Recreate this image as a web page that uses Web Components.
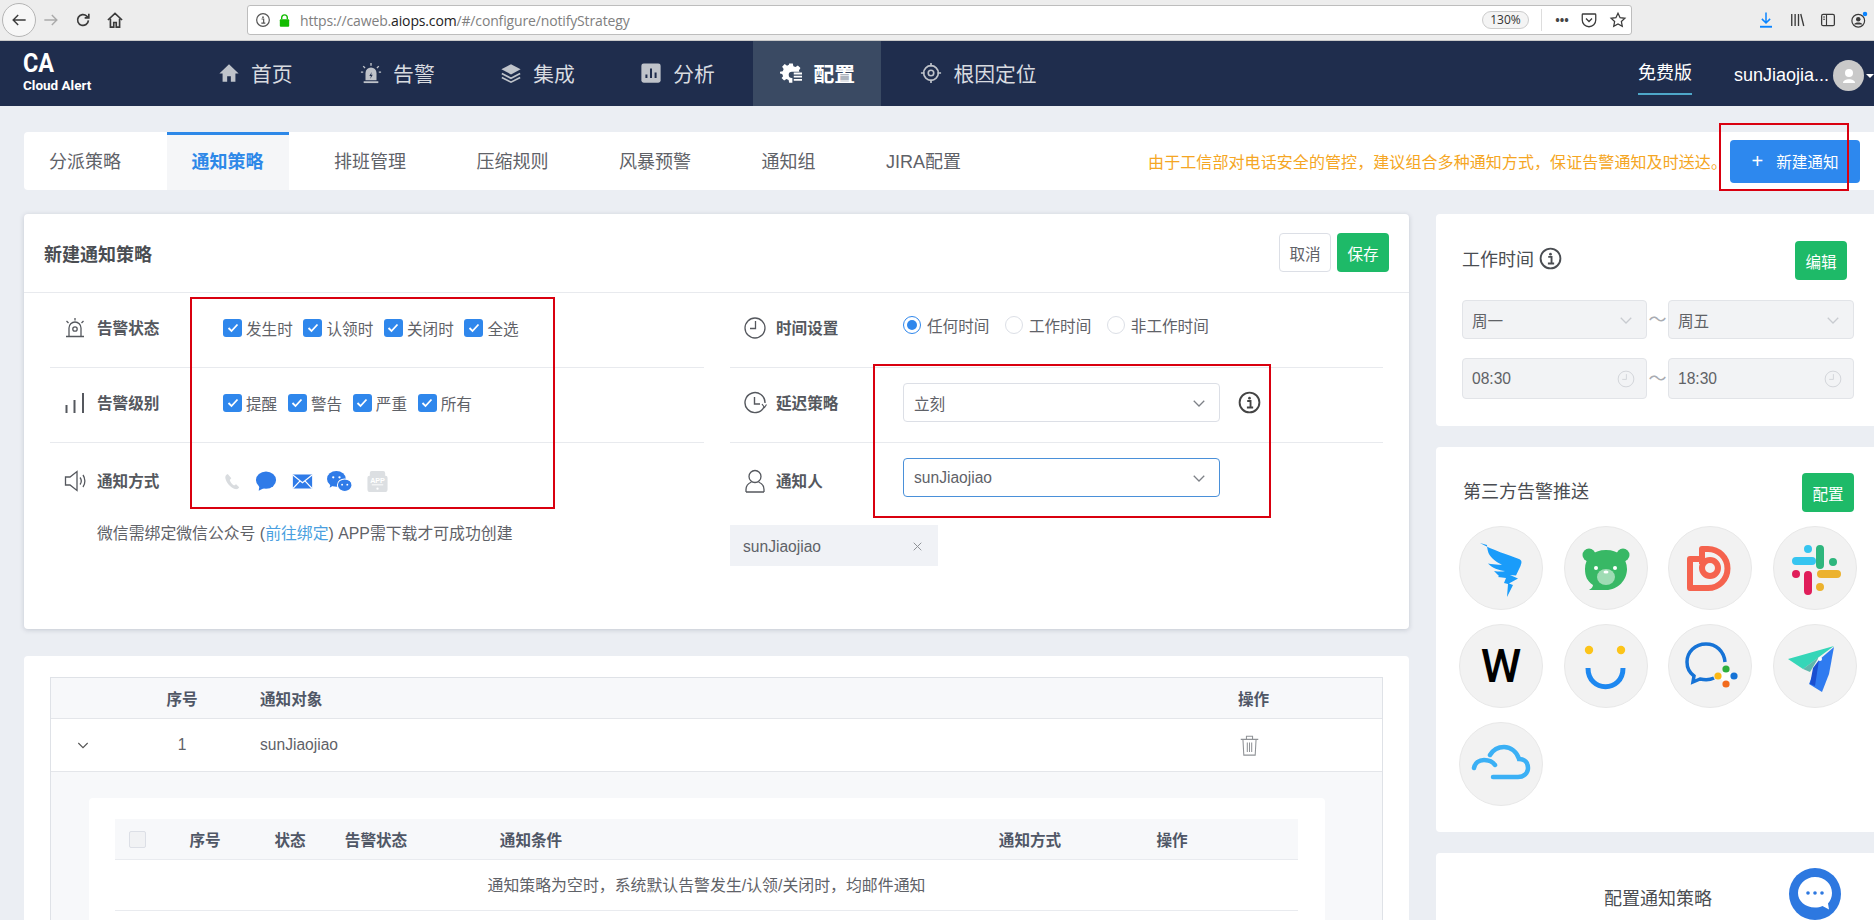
<!DOCTYPE html>
<html lang="zh-CN">
<head>
<meta charset="utf-8">
<title>notifyStrategy</title>
<style>
  html, body { margin: 0; height: 920px; overflow: hidden; }
  body {
    position: relative;
    background: #ebeef3;
    color: #5f6268;
    font-family: "Liberation Sans", "Noto Sans CJK SC", sans-serif;
    font-size: 15.6px;
  }
  .content { display: flex; flex-direction: column; gap: 24px; padding: 26px 0 0 24px; }
  .columns { display: grid; grid-template-columns: 1385px 438px; column-gap: 27px; align-items: start; }
  .stack-left { display: flex; flex-direction: column; gap: 27px; }
  .stack-right { display: flex; flex-direction: column; gap: 21px; }
</style>
</head>
<body>
<ca-browser-bar></ca-browser-bar>
<ca-nav></ca-nav>
<div class="content">
  <ca-tabs></ca-tabs>
  <div class="columns">
    <div class="stack-left">
      <ca-strategy-form></ca-strategy-form>
      <ca-policy-table></ca-policy-table>
    </div>
    <div class="stack-right">
      <ca-work-time></ca-work-time>
      <ca-push-grid></ca-push-grid>
      <ca-config-card></ca-config-card>
    </div>
  </div>
</div>
<ca-annotation x="1719" y="123" w="130" h="68"></ca-annotation>
<ca-annotation x="190" y="297" w="365" h="212"></ca-annotation>
<ca-annotation x="873" y="364" w="398" h="154"></ca-annotation>
<ca-chat-bubble></ca-chat-bubble>

<script>
const ICONS = {
  back: '<path d="M20 12H5M11 6l-6 6 6 6" fill="none" stroke="#3b3b3b" stroke-width="1.7"/>',
  forward: '<path d="M4 12h15M13 6l6 6-6 6" fill="none" stroke="#aaa" stroke-width="1.7"/>',
  reload: '<path d="M18.5 12.5a6.5 6.5 0 1 1-2-5.2L19 9.5M19 4.5v5h-5" fill="none" stroke="#3b3b3b" stroke-width="2"/>',
  browserHome: '<path d="M3.500 12l8.500-8 8.500 8M6.500 10.500v10h4V15h3v5.500h4v-10" fill="none" stroke="#3b3b3b" stroke-width="2"/>',
  circleInfo: '<circle cx="12" cy="12" r="9.500" fill="none" stroke="currentColor" stroke-width="1.800"/><circle cx="12" cy="7.800" r="1.300" fill="currentColor"/><path d="M9.800 10.500H13v6M9.500 16.800h6" fill="none" stroke="currentColor" stroke-width="1.800"/>',
  lock: '<path d="M7.500 10V7.500a4.500 4.500 0 0 1 9 0V10" fill="none" stroke="#12bc00" stroke-width="2.200"/><rect x="4.500" y="10" width="15" height="12" rx="1.500" fill="#12bc00"/>',
  pocket: '<path d="M4 4h16a1 1 0 0 1 1 1v7a9 9 0 0 1-18 0V5a1 1 0 0 1 1-1z" fill="none" stroke="#3b3b3b" stroke-width="1.700"/><path d="M8 10l4 4 4-4" fill="none" stroke="#3b3b3b" stroke-width="1.700"/>',
  star: '<path d="M12 3l2.800 5.900 6.400.8-4.700 4.400 1.200 6.400L12 17.400l-5.700 3.100 1.200-6.400-4.700-4.400 6.400-.8z" fill="none" stroke="#3b3b3b" stroke-width="1.700"/>',
  download: '<path d="M12 2v14M6.500 10.500L12 16l5.500-5.500" fill="none" stroke="#0a84ff" stroke-width="2"/><path d="M4 21h16" stroke="#0a84ff" stroke-width="2.500"/>',
  library: '<path d="M5 4v16M9.500 4v16M14 4v16M17 4l4 16" fill="none" stroke="#3b3b3b" stroke-width="1.800"/>',
  sidebar: '<rect x="3.500" y="4.500" width="17" height="15" rx="2" fill="none" stroke="#3b3b3b" stroke-width="1.700"/><path d="M10 4.500v15M5.500 8h2.500M5.500 11h2.500" fill="none" stroke="#3b3b3b" stroke-width="1.500"/>',
  account: '<circle cx="11" cy="13" r="8.500" fill="none" stroke="#3b3b3b" stroke-width="1.600"/><circle cx="11" cy="11" r="3" fill="#3b3b3b"/><path d="M5.500 18c1-3.500 10-3.500 11 0" fill="#3b3b3b"/><circle cx="20" cy="4" r="3" fill="#0a84ff"/>',
  navHome: '<path d="M12 2.500L1.500 12.500H5v9h5v-6h4v6h5v-9h3.500z" fill="currentColor"/>',
  navAlarm: '<path d="M6 20v-8a6 6 0 0 1 12 0v8z" fill="currentColor"/><path d="M4 21h16v2H4z" fill="currentColor"/><path d="M12.800 11l-2.600 4.300h1.700l-.7 3.200 2.700-4.500h-1.800z" fill="#1f2d4d"/><path d="M12 1v3M3.500 4.500l2 2M20.500 4.500l-2 2M1 11h2.500M20.500 11H23" stroke="currentColor" stroke-width="1.500"/>',
  navLayers: '<path d="M12 2.500L1.500 8 12 13.500 22.500 8z" fill="currentColor"/><path d="M2 12.500l10 5.300 10-5.300M2 16.800l10 5.200 10-5.200" fill="none" stroke="currentColor" stroke-width="1.800"/>',
  navChart: '<rect x="1.500" y="1.500" width="21" height="21" rx="2.500" fill="currentColor"/><path d="M7 17.500v-4M12 17.500V7M17 17.500v-6" stroke="#1f2d4d" stroke-width="2.200"/>',
  navGear: '<path d="M10 1.500h4l.6 3 2.300 1 2.600-1.700 2.800 2.800L20.600 9.200l.6 1.300H13a3.500 3.500 0 1 0 0 7h.5v5H10l-.6-3-2.300-1-2.600 1.700-2.800-2.800L3.400 15.500l-1-2.300-2.400-.6v-2l3-.6 1-2.300L2.300 5.100l2.800-2.800 2.600 1.700 2-.9z" fill="currentColor"/><path d="M15 12.500h9M15 16h9M15 19.500h9" stroke="currentColor" stroke-width="2"/>',
  navTarget: '<circle cx="12" cy="12" r="8" fill="none" stroke="currentColor" stroke-width="1.800"/><circle cx="12" cy="12" r="3" fill="none" stroke="currentColor" stroke-width="1.800"/><path d="M12 1v4M12 19v4M1 12h4M19 12h4" stroke="currentColor" stroke-width="1.800"/>',
  alarm: '<path d="M6 20v-8a6 6 0 0 1 12 0v8" fill="none" stroke="currentColor" stroke-width="1.300"/><circle cx="12" cy="13" r="2.200" fill="none" stroke="currentColor" stroke-width="1.300"/><path d="M3 20.500h18M12 2v2.500M3.500 5l2 2M20.500 5l-2 2" fill="none" stroke="currentColor" stroke-width="1.300"/>',
  bars: '<path d="M3.500 22v-8M11.500 22V9M20 22V2" stroke="currentColor" stroke-width="2"/>',
  speaker: '<path d="M2.500 8H7L14 2.500v19L7 16H2.500z" fill="none" stroke="currentColor" stroke-width="1.300"/><path d="M17 8.500c1.500 2 1.500 5 0 7M20 6c2.500 3.500 2.500 8.500 0 12" fill="none" stroke="currentColor" stroke-width="1.300"/>',
  clock: '<circle cx="12" cy="12" r="10" fill="none" stroke="currentColor" stroke-width="1.300"/><path d="M12.500 5v7.500H7" fill="none" stroke="currentColor" stroke-width="1.300"/>',
  delay: '<path d="M21 16a10 10 0 1 1 1-4" fill="none" stroke="currentColor" stroke-width="1.400"/><path d="M19 13l2.500 3.500 2-3" fill="none" stroke="currentColor" stroke-width="1.200"/><path d="M11.500 6v7H17" fill="none" stroke="currentColor" stroke-width="1.400"/>',
  person: '<circle cx="12" cy="7.500" r="6" fill="none" stroke="currentColor" stroke-width="1.300"/><path d="M3 23v-2.500c0-4 3-6.500 5.500-7.500M21 23v-2.500c0-4-3-6.500-5.500-7.500M3 23h18" fill="none" stroke="currentColor" stroke-width="1.300"/>',
  phone: '<path d="M6 2.500c-2.500 1-3.500 3-3 5.500 1.500 6 6 11.500 12 13.500 2.500.6 4.500-.3 5.500-2.300l-4-3.700-2.500 1.500c-2.500-1.500-4.500-4-5.500-7l2-2z" fill="#d9dcdf"/>',
  sms: '<ellipse cx="12" cy="11" rx="11" ry="9.500" fill="#2f7be8"/><path d="M5 17l-1 5.500 6-3z" fill="#2f7be8"/>',
  mail: '<rect x="1" y="4" width="22" height="16" fill="#2f7be8"/><path d="M1 4.500l11 9 11-9M1 20l8.500-9M23 20l-8.500-9" fill="none" stroke="#fff" stroke-width="1.300"/>',
  wechat: '<ellipse cx="9" cy="9.500" rx="9" ry="7.500" fill="#2f7be8"/><path d="M3.500 14l-1 4 4-2.500z" fill="#2f7be8"/><ellipse cx="17" cy="15.500" rx="7" ry="6" fill="#2f7be8" stroke="#fff" stroke-width="1"/><circle cx="6" cy="8" r="1.100" fill="#fff"/><circle cx="12" cy="8" r="1.100" fill="#fff"/><circle cx="14.500" cy="15" r=".9" fill="#fff"/><circle cx="19.500" cy="15" r=".9" fill="#fff"/>',
  appGrey: '<path d="M6 1h12a2 2 0 0 1 2 2v3h.500a2 2 0 0 1 2 2v12a3 3 0 0 1-3 3H4.500a3 3 0 0 1-3-3V8a2 2 0 0 1 2-2H4V3a2 2 0 0 1 2-2z" fill="#dcdfe2"/><text x="12" y="13.500" text-anchor="middle" font-size="7.500" font-weight="700" fill="#fff" font-family="Liberation Sans, sans-serif">APP</text><path d="M6 15.500h12" stroke="#fff" stroke-width="1"/><circle cx="12" cy="19.500" r="1.200" fill="#fff"/>',
  chevron: '<path d="M5 9l7 7 7-7" fill="none" stroke="currentColor" stroke-width="1.700"/>',
  close: '<path d="M5 5l14 14M19 5L5 19" fill="none" stroke="currentColor" stroke-width="1.800"/>',
  trash: '<path d="M2 5h20M8.500 5V1.500h7V5M4.500 5l1 18h13l1-18M9.500 8.500v11M12 8.500v11M14.500 8.500v11" fill="none" stroke="currentColor" stroke-width="1.200"/>',
  timeClock: '<circle cx="12" cy="12" r="10.500" fill="none" stroke="currentColor" stroke-width="1"/><path d="M12.500 5.500v7H7" fill="none" stroke="currentColor" stroke-width="1"/>'
};

const LOGOS = {
  dingtalk: '<path fill="#1a9cfa" d="M21 17C33 24 50 29 60 33c3 1.500 3 3 1.500 7L57 49.500l-6-.5 8 3.500-9 5 4 1.500-6 12 1-13-4-1 2-5-8-1 1-1-5-5c4 .5 8 1 11 0-6-.500-13-3-17-7.500 5 1 10 1.500 14 1-5-2-11-6-13.500-11.500-.5-1.500-1.500-5-1.500-8z"/>',
  bear: '<circle cx="25" cy="29" r="6.500" fill="#38b865"/><circle cx="59" cy="29" r="6.500" fill="#38b865"/><path fill="#38b865" d="M42 24c13 0 21 8 21 19s-9 21-21 21H25c2-1 4-3 4-5-6-4-8-9-8-16 0-11 8-19 21-19z"/><circle cx="32" cy="42" r="2" fill="#fff"/><circle cx="51" cy="42" r="2" fill="#fff"/><ellipse cx="42" cy="51" rx="9" ry="8" fill="#9fdcb4"/><ellipse cx="42" cy="46" rx="2.500" ry="1.500" fill="#fff"/>',
  dutyapp: '<g fill="none" stroke="#f5634e" stroke-width="6" stroke-linejoin="round"><path d="M34 38V23h6a19.500 19.500 0 1 1 0 39H22V33h12"/><circle cx="42" cy="42" r="8"/></g>',
  slack: '<g stroke-linecap="round" stroke-width="8" fill="none"><path d="M23 35h16M35 23h.01" stroke="#36c5f0"/><path d="M47 23v16M60 36h.01" stroke="#2eb67d"/><path d="M35 49v16M23 48h.01" stroke="#e01e5a"/><path d="M48 48h16M47 61h.01" stroke="#ecb22e"/></g>',
  smile: '<circle cx="25" cy="26" r="4.200" fill="#fcc419"/><circle cx="57" cy="26" r="4.200" fill="#fcc419"/><path d="M24 44c0 25 35 25 35 0" fill="none" stroke="#1e88f0" stroke-width="5"/>',
  wecom: '<path fill="none" stroke="#1673d6" stroke-width="3.500" d="M57 38c-1-11-9-18-19-18-11 0-19 8-19 18 0 6 3 11 7 14l-1 6 7-3c5 1 10 1 14-1"/><path d="M58 45l8 7-8 8-8-8z" fill="#fff"/><circle cx="58" cy="45" r="3.600" fill="#2eaf3c"/><circle cx="50" cy="52" r="3.600" fill="#fbb917"/><circle cx="58" cy="60" r="3.600" fill="#f26b1d"/><circle cx="66" cy="52" r="3.600" fill="#1673d6"/>',
  plane: '<path fill="#35d6b8" d="M15 35l46-13-15 11-16 12z"/><path fill="#1f9f8e" d="M30 45l16-12-9 15z" opacity=".7"/><path fill="#2f7bf0" d="M61 23l-5 27-7 18-13-8 10-24z"/><path fill="#1a4fd0" d="M46 36l-6 8-3 16 5 2z"/><circle cx="47" cy="35" r="2" fill="#fff"/>',
  cloud: '<path fill="none" stroke="#3bb0f5" stroke-width="4.500" stroke-linecap="round" d="M34 55h25c6 0 10-4 10-9s-3-9-9-9c-2-7-8-12-15-12-6 0-11 3-14 8M15 46c1-5 5-8 10-8 5 0 9 2 11 5"/>'
};

const icon = (name, w, h) => `<svg width="${w}" height="${h || w}" viewBox="0 0 24 24" style="display:block;flex:none">${ICONS[name]}</svg>`;

class CaBrowserBar extends HTMLElement {
  connectedCallback() {
    this.attachShadow({ mode: 'open' }).innerHTML = `
      <style>
        :host { display: flex; align-items: center; height: 40px; background: #ededed; border-bottom: 1px solid #c9c9c9; font-family: "Open Sans", sans-serif; }
        .back { width: 32px; height: 32px; margin-left: 2px; border: 1px solid #b5b5b5; border-radius: 50%; background: #f7f7f7; display: flex; align-items: center; justify-content: center; flex: none; }
        .nav { display: flex; align-items: center; gap: 12px; margin-left: 5px; width: 88px; flex: none; }
        .url { margin-left: 118px; width: 1385px; height: 30px; box-sizing: border-box; background: #fff; border: 1px solid #bdbdbd; border-radius: 3px; display: flex; align-items: center; padding-left: 7px; flex: none; }
        .addr { margin-left: 8px; font-size: 14px; color: #808080; white-space: nowrap; letter-spacing: -.15px; }
        .addr b { font-weight: 400; color: #222; }
        .grow { flex: 1; }
        .zoom { width: 47px; text-align: center; box-sizing: border-box; font-size: 12px; color: #333; border: 1px solid #ccc; background: #f4f4f4; border-radius: 9px; height: 18px; line-height: 16px; }
        .sep { width: 1px; height: 22px; background: #ddd; margin: 0 10px 0 12px; }
        .dots { width: 20px; text-align: center; font-size: 12px; color: #444; font-weight: 700; margin-right: 8px; white-space: nowrap; }
        .tools { display: flex; align-items: center; gap: 13px; margin-left: 125px; flex: none; }
      </style>
      <div class="back">${icon('back', 20)}</div>
      <div class="nav">${icon('forward', 20)}${icon('reload', 20)}${icon('browserHome', 20)}</div>
      <div class="url">
        <span style="color:#555">${icon('circleInfo', 16)}</span>
        <span style="margin-left:6px">${icon('lock', 15)}</span>
        <span class="addr">https://caweb.<b>aiops.com</b>/#/configure/notifyStrategy</span>
        <span class="grow"></span>
        <span class="zoom">130%</span>
        <span class="sep"></span>
        <span class="dots">•••</span>
        ${icon('pocket', 18)}<span style="width:11px"></span>${icon('star', 18)}<span style="width:4px"></span>
      </div>
      <div class="tools">${icon('download', 18)}${icon('library', 18)}${icon('sidebar', 18)}${icon('account', 18)}</div>`;
  }
}

class CaNav extends HTMLElement {
  connectedCallback() {
    const items = [
      ['navHome', '首页'], ['navAlarm', '告警'], ['navLayers', '集成'],
      ['navChart', '分析'], ['navGear', '配置'], ['navTarget', '根因定位']
    ];
    this.attachShadow({ mode: 'open' }).innerHTML = `
      <style>
        :host { display: flex; align-items: stretch; height: 65px; background: #1f2d4d; color: #d8dbe0; }
        .logo { width: 195px; padding: 9px 0 0 23px; color: #fff; font-family: Roboto, sans-serif; font-weight: 700; line-height: 1; flex: none; }
        .ca { display: block; font-size: 26px; transform: scaleX(.9); transform-origin: left; height: 28px; }
        .sub { display: block; font-size: 13.5px; margin-top: 1px; white-space: nowrap; }
        .item { display: flex; align-items: center; gap: 11px; font-size: 20.8px; margin-top: -2px; }
        .item svg { color: #bfc3ca; }
        .menu { display: flex; gap: 12.5px; }
        .cell { display: flex; align-items: center; justify-content: center; height: 65px; padding: 0 26px 0 27px; }
        .cell.first { padding: 0 28px 0 0; }
        .cell.active { background: #3a4a63; color: #fff; font-weight: 700; }
        .cell.active svg { color: #fff; }
        .right { margin-left: auto; display: flex; align-items: center; }
        .free { font-size: 18px; color: #fff; padding: 10px 0 7px; border-bottom: 2px solid #4ea7c9; margin-top: -2px; line-height: 25px; }
        .user { margin-left: 42px; font-size: 18px; color: #fff; margin-top: 4px; }
        .avatar { width: 31px; height: 31px; border-radius: 50%; background: #c9c9c9; margin: 4px 0 0 4px; display: flex; align-items: center; justify-content: center; flex: none; }
        .caret { width: 0; height: 0; margin: 4px 0 0 2px; border: 4px solid transparent; border-top-color: #fff; border-bottom: 0; }
      </style>
      <div class="logo"><span class="ca">CA</span><span class="sub">Cloud Alert</span></div>
      <div class="menu">
        ${items.map(([name, text], i) => `
          <div class="cell ${i === 4 ? 'active' : ''} ${i === 0 ? 'first' : ''}">
            <div class="item">${icon(name, 22)}<span>${text}</span></div>
          </div>`).join('')}
      </div>
      <div class="right">
        <span class="free">免费版</span>
        <span class="user">sunJiaojia...</span>
        <span class="avatar"><svg width="14" height="16" viewBox="0 0 14 16"><circle cx="7" cy="5" r="4" fill="#fff"/><path d="M1 15c0-5 12-5 12 0z" fill="#fff"/></svg></span>
        <span class="caret"></span>
      </div>`;
  }
}

class CaTabs extends HTMLElement {
  connectedCallback() {
    const tabs = ['分派策略', '通知策略', '排班管理', '压缩规则', '风暴预警', '通知组', 'JIRA配置'];
    this.attachShadow({ mode: 'open' }).innerHTML = `
      <style>
        :host { display: flex; align-items: stretch; height: 58px; background: #fff; border-radius: 4px 0 0 4px; }
        .tab { display: flex; align-items: center; padding: 0 25px 2px; margin-right: 20.5px; font-size: 18px; color: #5f6268; box-sizing: border-box; }
        .tab.active { background: #f5f6f8; color: #2d88e8; font-weight: 700; box-shadow: inset 0 3px 0 #2d88e8; }
        .note { margin-left: auto; align-self: center; font-size: 16px; letter-spacing: .08px; color: #f5a623; white-space: nowrap; margin-right: 3px; }
        button { align-self: center; width: 130px; height: 43px; margin-right: 14px; border: 0; border-radius: 4px; background: #2d88ee; color: #fff; font: inherit; font-size: 15.6px; display: flex; align-items: center; justify-content: center; gap: 13px; }
        button span:first-child { font-size: 20px; line-height: 1; }
      </style>
      ${tabs.map((t, i) => `<div class="tab ${i === 1 ? 'active' : ''}">${t}</div>`).join('')}
      <div class="note">由于工信部对电话安全的管控，建议组合多种通知方式，保证告警通知及时送达。</div>
      <button><span>+</span><span>新建通知</span></button>`;
  }
}

class CaButton extends HTMLElement {
  connectedCallback() {
    this.attachShadow({ mode: 'open' }).innerHTML = `
      <style>
        :host { display: inline-flex; align-items: center; justify-content: center; height: 39px; width: 52px; box-sizing: border-box; border-radius: 4px; font-size: 15.6px; background: #1eba68; color: #fff; flex: none; }
        :host([plain]) { background: #fff; color: #5f6268; border: 1px solid #dcdfe6; }
      </style><slot></slot>`;
  }
}

class CaCheck extends HTMLElement {
  connectedCallback() {
    this.attachShadow({ mode: 'open' }).innerHTML = `
      <style>
        :host { display: inline-flex; align-items: center; gap: 4px; margin-right: 10.7px; font-size: 15.6px; color: #5f6268; }
        i { display: flex; align-items: center; justify-content: center; width: 19px; height: 18px; background: #2f87ec; border-radius: 3px; }
      </style>
      <i><svg width="12" height="10" viewBox="0 0 12 10"><path d="M1.500 5l3 3 6-6.500" fill="none" stroke="#fff" stroke-width="1.800"/></svg></i><slot></slot>`;
  }
}

class CaRadio extends HTMLElement {
  connectedCallback() {
    this.attachShadow({ mode: 'open' }).innerHTML = `
      <style>
        :host { display: inline-flex; align-items: center; gap: 6px; margin-right: 15.5px; font-size: 15.6px; color: #5f6268; }
        i { width: 16px; height: 16px; border: 1px solid #dcdfe6; border-radius: 50%; display: flex; align-items: center; justify-content: center; background: #fff; }
        :host([checked]) i { border-color: #2f87ec; }
        :host([checked]) i::after { content: ""; width: 10px; height: 10px; border-radius: 50%; background: #2f87ec; }
      </style>
      <i></i><slot></slot>`;
  }
}

class CaSelect extends HTMLElement {
  connectedCallback() {
    this.attachShadow({ mode: 'open' }).innerHTML = `
      <style>
        :host { display: flex; align-items: center; justify-content: space-between; box-sizing: border-box; height: 39px; padding: 0 11px 0 9px; border: 1px solid #dcdfe6; border-radius: 4px; background: #fff; color: #5f6268; font-size: 15.6px; }
        :host([focused]) { border-color: #4a90d9; }
        :host([disabled]) { background: #f2f3f5; color: #606266; border-color: #e2e4e8; }
        :host([disabled]) .end { color: #c8cbd0; }
        .end { color: #7d8187; }
      </style>
      <slot></slot>
      <span class="end">${this.hasAttribute('time') ? icon('timeClock', 18) : icon('chevron', 18)}</span>`;
  }
}

class CaFormRow extends HTMLElement {
  connectedCallback() {
    this.attachShadow({ mode: 'open' }).innerHTML = `
      <style>
        :host { display: flex; align-items: center; box-sizing: border-box; height: 75px; padding: 0 0 5px 15px; border-bottom: 1px solid #e8eaee; }
        :host([last]) { height: 76px; padding-bottom: 0; border-bottom: 0; }
        .ico { width: var(--icon-w, 32px); flex: none; color: #55585e; }
        .ico svg { margin-left: -2px; }
        .lab { width: calc(158px - var(--icon-w, 32px)); flex: none; margin-top: -2px; font-weight: 700; font-size: 15.6px; color: #55585e; white-space: nowrap; }
        .ctl { flex: 1; display: flex; align-items: center; min-width: 0; }
      </style>
      <div class="ico">${icon(this.getAttribute('icon'), 24)}</div>
      <div class="lab">${this.getAttribute('label')}</div>
      <div class="ctl"><slot></slot></div>`;
  }
}

class CaStrategyForm extends HTMLElement {
  connectedCallback() {
    const channel = (n, w, gap) => `<span style="margin-right:${gap}px">${icon(n, w)}</span>`;
    this.attachShadow({ mode: 'open' }).innerHTML = `
      <style>
        :host { display: block; height: 415px; background: #fff; border-radius: 4px; box-shadow: 0 1px 5px rgba(60,70,90,.22); }
        header { display: flex; align-items: center; justify-content: space-between; height: 79px; box-sizing: border-box; padding: 0 20px; border-bottom: 1px solid #e8eaee; }
        h2 { margin: 0; font-size: 18px; font-weight: 700; color: #4a4d52; }
        .acts { display: flex; gap: 6px; margin-top: -1px; }
        .body { display: grid; grid-template-columns: 654px 653px; column-gap: 26px; padding: 0 26px; }
        .hint { padding-left: 47px; margin-top: 3px; line-height: 24px; font-size: 15.85px; white-space: nowrap; color: #5f6268; }
        .hint a { color: #4a9fe0; }
        .sel { width: 317px; margin-bottom: 8px; padding-left: 10px; }
        .user { padding-top: 2px; }
        .info { margin-left: 17px; color: #444; }
        .tag { display: flex; align-items: center; justify-content: space-between; width: 208px; height: 41px; box-sizing: border-box; padding: 2px 14px 0 13px; margin-top: 6px; background: #f0f2f6; font-size: 15.6px; color: #5f6268; }
        .tag span { color: #8d9095; }
        .right { --icon-w: 31px; }
      </style>
      <header>
        <h2>新建通知策略</h2>
        <div class="acts"><ca-button plain>取消</ca-button><ca-button>保存</ca-button></div>
      </header>
      <div class="body">
        <div>
          <ca-form-row icon="alarm" label="告警状态"><ca-check>发生时</ca-check><ca-check>认领时</ca-check><ca-check>关闭时</ca-check><ca-check>全选</ca-check></ca-form-row>
          <ca-form-row icon="bars" label="告警级别"><ca-check>提醒</ca-check><ca-check>警告</ca-check><ca-check>严重</ca-check><ca-check>所有</ca-check></ca-form-row>
          <ca-form-row icon="speaker" label="通知方式" last>
            ${channel('phone', 19, 13)}${channel('sms', 22, 15)}${channel('mail', 21, 14)}${channel('wechat', 25, 14)}${channel('appGrey', 23, 0)}
          </ca-form-row>
          <div class="hint">微信需绑定微信公众号 (<a>前往绑定</a>) APP需下载才可成功创建</div>
        </div>
        <div class="right">
          <ca-form-row icon="clock" label="时间设置"><div style="display:flex;margin-top:-6px"><ca-radio checked>任何时间</ca-radio><ca-radio>工作时间</ca-radio><ca-radio>非工作时间</ca-radio></div></ca-form-row>
          <ca-form-row icon="delay" label="延迟策略"><ca-select class="sel" style="margin-bottom:0">立刻</ca-select><span class="info">${icon('circleInfo', 25)}</span></ca-form-row>
          <ca-form-row icon="person" label="通知人" last><ca-select class="sel user" focused>sunJiaojiao</ca-select></ca-form-row>
          <div class="tag">sunJiaojiao<span>${icon('close', 13)}</span></div>
        </div>
      </div>`;
  }
}

class CaPolicyTable extends HTMLElement {
  connectedCallback() {
    this.attachShadow({ mode: 'open' }).innerHTML = `
      <style>
        :host { display: block; height: 264px; overflow: hidden; background: #fff; border-radius: 4px 4px 0 0; padding: 21px 26px 0; box-sizing: border-box; }
        .wrap { border: 1px solid #dfe2e7; border-bottom: 0; height: 243px; box-sizing: border-box; background: #f7f8fa; overflow: hidden; }
        .row { display: grid; grid-template-columns: 63px 136px 1fr 154px; align-items: center; }
        .head { height: 40px; background: #f7f8fa; border-bottom: 1px solid #e4e6ea; font-weight: 700; color: #505766; }
        .data { height: 52px; background: #fff; border-bottom: 1px solid #e4e6ea; color: #5f6268; }
        .c { text-align: center; }
        .p { padding-left: 10px; }
        .chev { display: flex; justify-content: center; color: #555; }
        .inner { margin: 26px 57px 0 38px; padding: 21px 27px 0 26px; background: #fff; border-radius: 4px; height: 120px; }
        .irow { display: grid; grid-template-columns: 44px 92px 78px 94px 216px 321px 140px 144px 1fr; align-items: center; height: 40px; background: #f7f8fa; border-bottom: 1px solid #e9ebef; font-weight: 700; color: #505766; text-align: center; }
        .box { width: 17px; height: 17px; margin: auto; border: 1px solid #dcdfe6; border-radius: 2px; background: #f1f2f4; box-sizing: border-box; }
        .empty { height: 51px; padding-bottom: 2px; box-sizing: border-box; display: flex; align-items: center; justify-content: center; border-bottom: 1px solid #e9ebef; color: #5f6268; font-size: 15.9px; }
        .trash { color: #8f9296; }
      </style>
      <div class="wrap">
        <div class="row head"><span></span><span class="c">序号</span><span class="p">通知对象</span><span class="p">操作</span></div>
        <div class="row data">
          <span class="chev">${icon('chevron', 16)}</span><span class="c">1</span><span class="p">sunJiaojiao</span>
          <span class="p trash" style="padding-left:11px">${icon('trash', 21)}</span>
        </div>
        <div class="inner">
          <div class="irow"><span><span class="box" style="display:block"></span></span><span>序号</span><span>状态</span><span>告警状态</span><span>通知条件</span><span></span><span>通知方式</span><span>操作</span><span></span></div>
          <div class="empty">通知策略为空时，系统默认告警发生/认领/关闭时，均邮件通知</div>
        </div>
      </div>`;
  }
}

class CaWorkTime extends HTMLElement {
  connectedCallback() {
    this.attachShadow({ mode: 'open' }).innerHTML = `
      <style>
        :host { display: block; height: 212px; box-sizing: border-box; padding: 27px 20px 0 26px; background: #fff; border-radius: 4px 0 0 4px; }
        header { display: flex; align-items: center; justify-content: space-between; height: 39px; margin-right: 7px; }
        h3 { margin: 0; display: flex; align-items: center; gap: 4px; font-size: 18px; font-weight: 400; color: #4a4d52; margin-top: -5px; }
        .pair { display: grid; grid-template-columns: 185px 1fr 186px; align-items: center; margin-top: 20px; }
        .pair + .pair { margin-top: 19px; }
        .pair.t ca-select { height: 41px; }
        .til { text-align: center; color: #a9acb2; font-size: 18px; line-height: 1; }
      </style>
      <header><h3>工作时间 ${icon('circleInfo', 25)}</h3><ca-button>编辑</ca-button></header>
      <div class="pair"><ca-select disabled>周一</ca-select><span class="til">～</span><ca-select disabled>周五</ca-select></div>
      <div class="pair t"><ca-select disabled time>08:30</ca-select><span class="til">～</span><ca-select disabled time>18:30</ca-select></div>`;
  }
}

class CaPushGrid extends HTMLElement {
  connectedCallback() {
    const names = ['dingtalk', 'bear', 'dutyapp', 'slack', 'W', 'smile', 'wecom', 'plane', 'cloud'];
    this.attachShadow({ mode: 'open' }).innerHTML = `
      <style>
        :host { display: block; height: 385px; box-sizing: border-box; padding: 26px 20px 0 23px; background: #fff; border-radius: 4px 0 0 4px; }
        header { display: flex; align-items: center; justify-content: space-between; height: 39px; padding-left: 4px; }
        h3 { margin: 0; font-size: 18px; font-weight: 400; color: #4a4d52; margin-top: -6px; }
        .grid { display: grid; grid-template-columns: repeat(4, 84px); column-gap: 20.5px; row-gap: 14px; margin-top: 14px; }
        .logo { width: 84px; height: 84px; box-sizing: border-box; border: 1px solid #e8e8e8; border-radius: 50%; background: #f2f2f2; display: flex; align-items: center; justify-content: center; overflow: hidden; }
        .w { font: 500 46px Roboto, sans-serif; color: #000; }
      </style>
      <header><h3>第三方告警推送</h3><ca-button>配置</ca-button></header>
      <div class="grid">
        ${names.map(n => `<div class="logo">${n === 'W' ? '<span class="w">W</span>' : `<svg width="84" height="84" viewBox="0 0 84 84" style="flex:none">${LOGOS[n]}</svg>`}</div>`).join('')}
      </div>`;
  }
}

class CaConfigCard extends HTMLElement {
  connectedCallback() {
    this.attachShadow({ mode: 'open' }).innerHTML = `
      <style>
        :host { display: block; height: 67px; box-sizing: border-box; padding: 34px 0 0 6px; background: #fff; border-radius: 4px 0 0 0; text-align: center; font-size: 18px; line-height: 24px; color: #4a4d52; }
      </style>
      配置通知策略`;
  }
}

// red marks drawn over the screenshot
class CaAnnotation extends HTMLElement {
  connectedCallback() {
    const a = n => this.getAttribute(n);
    this.attachShadow({ mode: 'open' }).innerHTML = `
      <style>
        :host { position: absolute; display: block; box-sizing: border-box; border: 2px solid #d9000f; pointer-events: none;
          left: ${a('x')}px; top: ${a('y')}px; width: ${a('w')}px; height: ${a('h')}px; }
      </style>`;
  }
}

class CaChatBubble extends HTMLElement {
  connectedCallback() {
    this.attachShadow({ mode: 'open' }).innerHTML = `
      <style>
        :host { position: absolute; left: 1789px; top: 868px; width: 52px; height: 52px; display: block; border-radius: 50%; background: #2d78e0; }
        svg { display: block; }
      </style>
      <svg width="52" height="52" viewBox="0 0 52 52">
        <path d="M26 9c10 0 17 7 17 16 0 4-1.500 7.500-4 10.500l1 6-6.500-3.500c-2.300 1-4.800 1.500-7.500 1.500-10 0-17-6.500-17-14.500S16 9 26 9z" fill="#fff"/>
        <circle cx="19" cy="25" r="1.800" fill="#2d78e0"/><circle cx="26" cy="25" r="1.800" fill="#2d78e0"/><circle cx="33" cy="25" r="1.800" fill="#2d78e0"/>
      </svg>`;
  }
}

customElements.define('ca-browser-bar', CaBrowserBar);
customElements.define('ca-nav', CaNav);
customElements.define('ca-tabs', CaTabs);
customElements.define('ca-button', CaButton);
customElements.define('ca-check', CaCheck);
customElements.define('ca-radio', CaRadio);
customElements.define('ca-select', CaSelect);
customElements.define('ca-form-row', CaFormRow);
customElements.define('ca-strategy-form', CaStrategyForm);
customElements.define('ca-policy-table', CaPolicyTable);
customElements.define('ca-work-time', CaWorkTime);
customElements.define('ca-push-grid', CaPushGrid);
customElements.define('ca-config-card', CaConfigCard);
customElements.define('ca-annotation', CaAnnotation);
customElements.define('ca-chat-bubble', CaChatBubble);
</script>
</body>
</html>
